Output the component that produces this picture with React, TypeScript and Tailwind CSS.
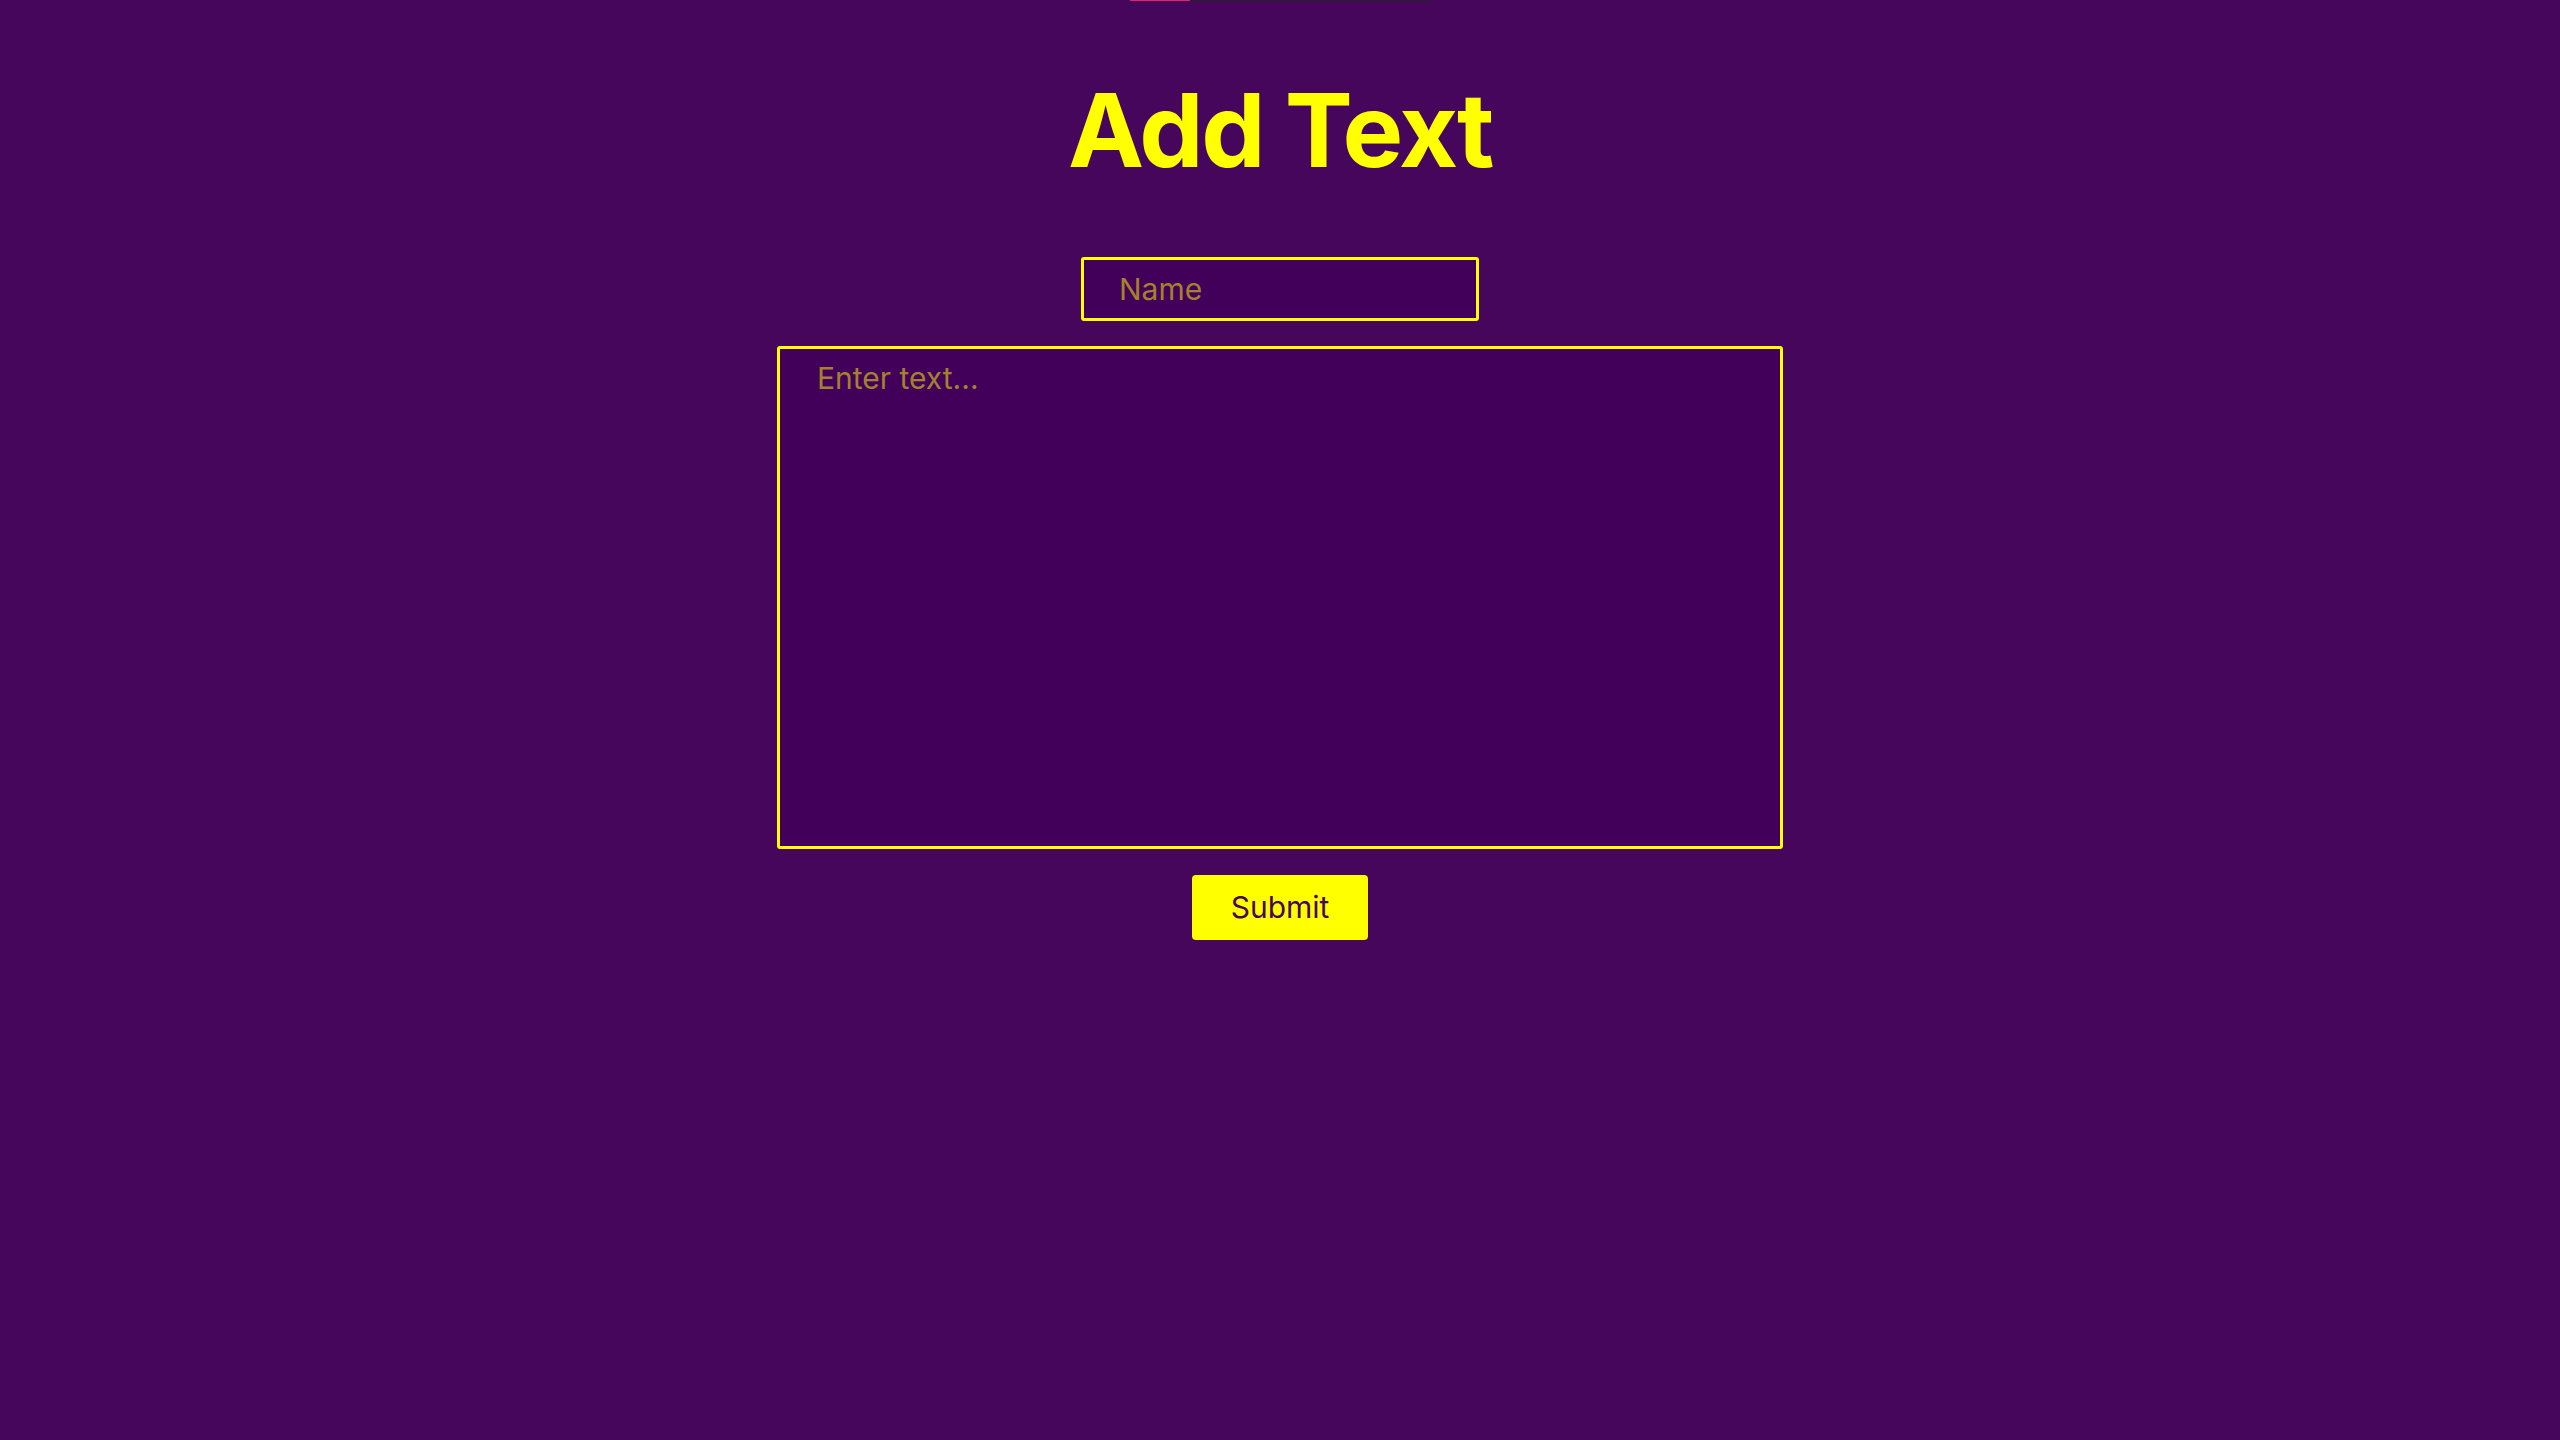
export default function App() {
  return (
    <div
      className="flex min-h-screen flex-col items-center bg-[#46065c]"
      style={{ fontFamily: 'Inter, "Noto Sans", sans-serif' }}
    >
      <div className="flex h-px w-[301px]">
        <div className="h-full w-[60px] bg-[#e0245e]" />
        <div className="h-full flex-1 bg-[#222222]" />
      </div>

      <h1 className="mt-[78px] text-[102px] font-bold leading-none tracking-[-2.4px] text-[#ffff00]">
        Add Text
      </h1>

      <form className="mt-[76px] flex flex-col items-center" onSubmit={(e) => e.preventDefault()}>
        <input
          type="text"
          placeholder="Name"
          className="h-[64px] w-[398px] rounded-[3px] border-[3px] border-[#ffff00] bg-[#42005a] pl-[35px] text-[30px] text-[#ffff00] outline-none placeholder:text-[#a2822d]"
        />
        <textarea
          placeholder="Enter text..."
          className="mt-[25px] h-[503px] w-[1006px] resize-none rounded-[3px] border-[3px] border-[#ffff00] bg-[#42005a] pl-[37px] pt-[7px] text-[30px] text-[#ffff00] outline-none placeholder:text-[#a2822d]"
        />
        <button
          type="submit"
          className="mt-[26px] h-[65px] w-[176px] rounded-[4px] bg-[#ffff00] text-[30px] text-[#46065c]"
        >
          Submit
        </button>
      </form>
    </div>
  );
}
